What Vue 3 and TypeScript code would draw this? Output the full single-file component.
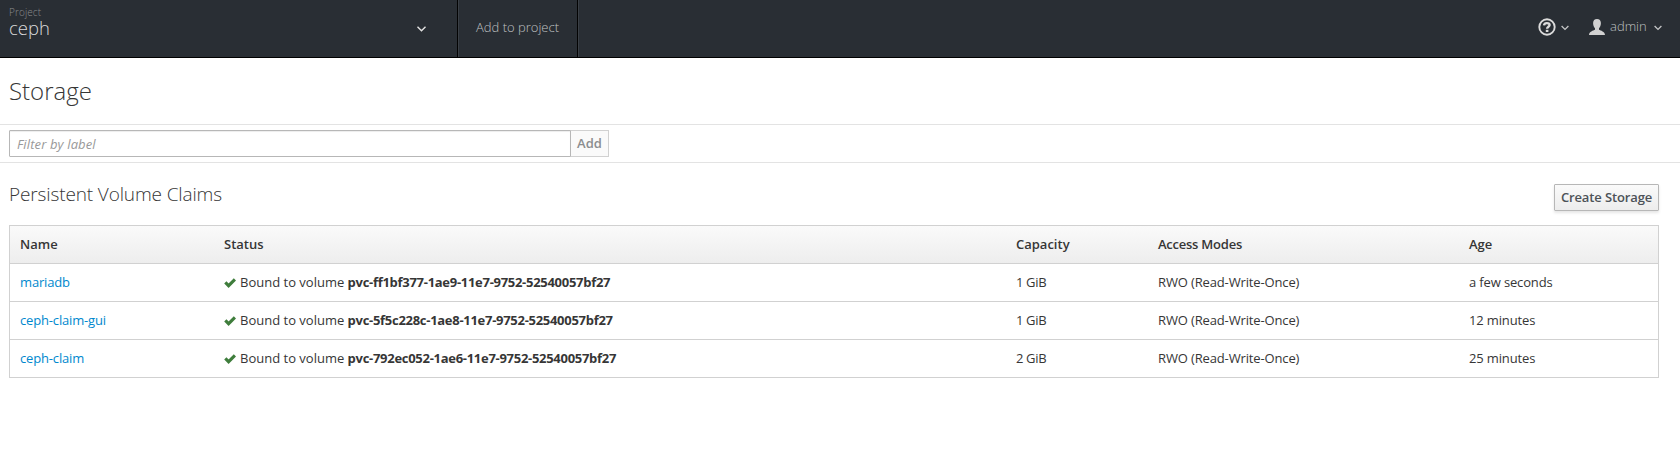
<script setup lang="ts">
interface Claim {
  name: string
  volume: string
  capacity: string
  access: string
  age: string
}

const claims: Claim[] = [
  { name: 'mariadb', volume: 'pvc-ff1bf377-1ae9-11e7-9752-52540057bf27', capacity: '1 GiB', access: 'RWO (Read-Write-Once)', age: 'a few seconds' },
  { name: 'ceph-claim-gui', volume: 'pvc-5f5c228c-1ae8-11e7-9752-52540057bf27', capacity: '1 GiB', access: 'RWO (Read-Write-Once)', age: '12 minutes' },
  { name: 'ceph-claim', volume: 'pvc-792ec052-1ae6-11e7-9752-52540057bf27', capacity: '2 GiB', access: 'RWO (Read-Write-Once)', age: '25 minutes' },
]
</script>

<template>
  <div class="page">
    <header class="navbar">
      <div class="project">
        <div class="project-text">
          <span class="project-label">Project</span>
          <span class="project-name">ceph</span>
        </div>
        <svg class="project-caret" width="9" height="6" viewBox="0 0 9 6"><path d="M.5 .8l4 4L8.500 .8" /></svg>
      </div>
      <a class="add-project">Add to project</a>
      <div class="utilities">
        <svg class="help" width="18" height="18" viewBox="0 0 18 18">
          <circle cx="9" cy="9" r="7.700" />
          <path class="mark" d="M6 7.400C6.200 5.700 7.400 5.100 8.900 5.100c1.700 0 2.700.7 2.700 1.900 0 1.700-2.500 1.700-2.500 3.700" />
          <rect x="7.800" y="11.800" width="2.600" height="2.200" />
        </svg>
        <svg class="small-caret help-caret" width="8" height="6" viewBox="0 0 8 6"><path d="M.6 1L4 4.400 7.400 1" /></svg>
        <svg class="user" width="16" height="16" viewBox="0 0 16 16">
          <path d="M8 0c2.500 0 3.900 1.600 3.900 4.100 0 2-.7 4.200-1.900 5.200v1.500c1.700.9 5.900 1.700 6 5.200H0c.1-3.500 4.300-4.300 6-5.200V9.300C4.800 8.300 4.100 6.100 4.100 4.100 4.100 1.600 5.500 0 8 0z" />
        </svg>
        <span class="username">admin</span>
        <svg class="small-caret" width="8" height="6" viewBox="0 0 8 6"><path d="M.6 1L4 4.400 7.400 1" /></svg>
      </div>
    </header>

    <h1 class="title">Storage</h1>

    <div class="filter">
      <input class="filter-input" type="text" placeholder="Filter by label" />
      <button class="filter-add" disabled>Add</button>
    </div>

    <main class="content">
      <div class="section-head">
        <h2>Persistent Volume Claims</h2>
        <button class="create">Create Storage</button>
      </div>
      <table class="claims">
        <colgroup>
          <col class="c-name" /><col class="c-status" /><col class="c-capacity" /><col class="c-access" /><col />
        </colgroup>
        <thead>
          <tr><th>Name</th><th>Status</th><th>Capacity</th><th class="th-access">Access Modes</th><th>Age</th></tr>
        </thead>
        <tbody>
          <tr v-for="claim in claims" :key="claim.name">
            <td><a class="link">{{ claim.name }}</a></td>
            <td>
              <div class="status">
                <svg class="check" width="12" height="10" viewBox="0 0 12 10"><path d="M1.300 4.400l3.300 3.300L10.900 1.400" /></svg>
                <span>Bound to volume <b>{{ claim.volume }}</b></span>
              </div>
            </td>
            <td class="capacity">{{ claim.capacity }}</td>
            <td class="tight">{{ claim.access }}</td>
            <td class="tight">{{ claim.age }}</td>
          </tr>
        </tbody>
      </table>
    </main>
  </div>
</template>

<style>
body {
  margin: 0;
  background: #fff;
}
</style>

<style scoped>
.page {
  height: 461px;
  overflow: hidden;
  background: #fff;
  color: #363636;
  font: 13px/21px "Open Sans", "Noto Sans", sans-serif;
}

.navbar {
  box-sizing: border-box;
  display: flex;
  height: 58px;
  background: #292e34;
  border-bottom: 1px solid #000;
}

.project {
  box-sizing: border-box;
  display: flex;
  justify-content: space-between;
  width: 458px;
  padding: 5px 31px 0 9px;
  border-right: 1px solid #030303;
}

.project-text {
  display: flex;
  flex-direction: column;
}

.project-label {
  color: #8b8d8f;
  font-size: 10px;
  font-weight: 300;
  letter-spacing: .1px;
  line-height: 14px;
}

.project-name {
  color: #dbdbdb;
  font-size: 18.500px;
  font-weight: 300;
  line-height: 18px;
}

.project-caret {
  margin-top: 21px;
  fill: none;
  stroke: #e4e4e4;
  stroke-width: 1.400;
}

.add-project {
  box-sizing: border-box;
  width: 120px;
  padding: 17px 0 0 17px;
  border-left: 1px solid #3a3f45;
  border-right: 1px solid #030303;
  box-shadow: 1px 0 #3a3f45;
  color: #bfc0c1;
  font-weight: 300;
}

.utilities {
  display: flex;
  align-items: center;
  height: 53px;
  margin-left: auto;
  padding-right: 18px;
}

.help {
  fill: none;
  stroke: #dbdbdb;
  stroke-width: 1.900;
}

.help .mark {
  stroke-width: 2.400;
}

.help rect {
  fill: #dbdbdb;
  stroke: none;
}

.small-caret {
  margin-top: 2px;
  fill: none;
  stroke: #c4c5c6;
  stroke-width: 1.300;
}

.help-caret {
  margin: 2px 20px 0 5px;
}

.user {
  margin-top: 1px;
  margin-right: 5px;
  fill: #d1d1d1;
}

.username {
  width: 44px;
  color: #bfc0c1;
  font-weight: 300;
}

.title {
  box-sizing: border-box;
  height: 66px;
  margin: 0;
  padding: 20px 9px 0;
  font-size: 24px;
  font-weight: 300;
  line-height: 26px;
}

.filter {
  box-sizing: border-box;
  display: flex;
  height: 39px;
  padding: 5px 9px 0;
  border-top: 1px solid #e3e3e3;
  border-bottom: 1px solid #e3e3e3;
}

.filter-input {
  box-sizing: border-box;
  width: 562px;
  height: 27px;
  padding: 2px 6px 2px 7px;
  border: 1px solid #b7b7b7;
  border-radius: 1px 0 0 1px;
  box-shadow: inset 0 1px 1px rgba(3, 3, 3, .075);
  background: #fff;
  font: inherit;
}

.filter-input::placeholder {
  color: #999;
  font-style: italic;
  letter-spacing: .13px;
  opacity: 1;
}

.filter-add {
  box-sizing: border-box;
  width: 39px;
  height: 27px;
  margin-left: -1px;
  padding: 0;
  border: 1px solid #d1d1d1;
  border-left-color: #b7b7b7;
  background: #fafafa;
  color: #8b8d8f;
  font: 600 13px/21px "Open Sans", sans-serif;
}

.content {
  padding: 0 21px 0 9px;
}

.section-head {
  display: flex;
  justify-content: space-between;
  height: 62px;
}

.section-head h2 {
  margin: 20px 0 0;
  font-size: 19px;
  font-weight: 300;
  letter-spacing: -.13px;
  line-height: 22px;
}

.create {
  box-sizing: border-box;
  width: 105px;
  height: 27px;
  margin-top: 21px;
  padding: 0;
  border: 1px solid #b7b7b7;
  border-radius: 1px;
  box-shadow: 0 2px 3px rgba(3, 3, 3, .1);
  background: linear-gradient(#fafafa, #ededed);
  color: #4d5258;
  font: 600 13px/21px "Open Sans", sans-serif;
  letter-spacing: -.13px;
}

.claims {
  width: 1650px;
  table-layout: fixed;
  border-collapse: separate;
  border-spacing: 0;
  border: 1px solid #d1d1d1;
  border-bottom: 0;
}

.c-name { width: 204px; }
.c-status { width: 792px; }
.c-capacity { width: 142px; }
.c-access { width: 311px; }

th,
td {
  box-sizing: border-box;
  height: 38px;
  padding: 0 10px;
  border-bottom: 1px solid #d1d1d1;
  text-align: left;
  vertical-align: middle;
  white-space: nowrap;
}

th {
  font-weight: 600;
}

.th-access {
  letter-spacing: -.24px;
}

thead {
  background: linear-gradient(#fafafa, #ededed);
}

.link {
  color: #0088ce;
  letter-spacing: -.16px;
}

.capacity {
  letter-spacing: -.35px;
}

.tight {
  letter-spacing: -.14px;
}

.status {
  display: flex;
  align-items: center;
}

.status b {
  letter-spacing: -.285px;
}

.check {
  margin-right: 4px;
  fill: none;
  stroke: #3f7d3c;
  stroke-width: 3.100;
}
</style>
